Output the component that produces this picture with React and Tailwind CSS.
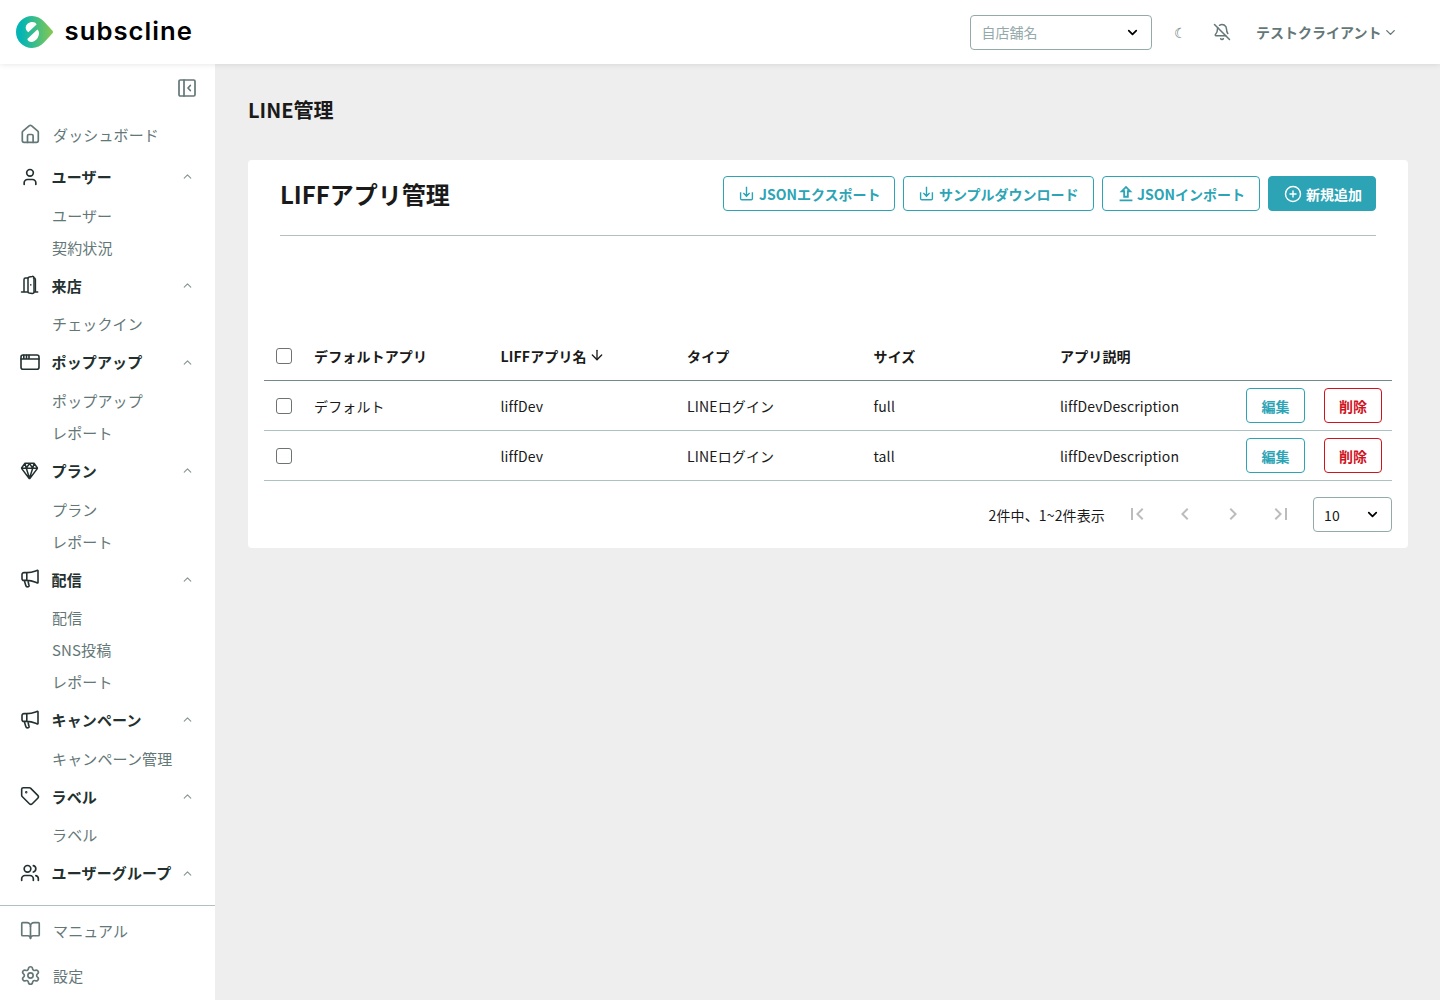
import React from 'react';
import { BellOff, BookOpen, CirclePlus, Settings, Tag, User, Users, ChevronDown, ChevronUp, ArrowDown } from 'lucide-react';
import { MdFirstPage, MdLastPage, MdChevronLeft, MdChevronRight, MdOutlineUpload } from 'react-icons/md';

function Svg({ children, size = 20, sw = 1.6, className = '' }) {
  return (
    <svg width={size} height={size} viewBox="0 0 20 20" fill="none" stroke="currentColor" strokeWidth={sw} strokeLinecap="round" strokeLinejoin="round" className={className}>
      {children}
    </svg>
  );
}

const Home = () => (
  <Svg sw={1.7}>
    <path d="M2.300 8.300a1.500 1.500 0 0 1 .6-1.200L9.400 1.700a1.600 1.600 0 0 1 2 0l6.400 5.400a1.500 1.500 0 0 1 .5 1.200v8.200a1.800 1.800 0 0 1-1.800 1.800H4.100a1.800 1.800 0 0 1-1.800-1.800z" />
    <path d="M7.500 18.300v-6.500a1.300 1.300 0 0 1 1.300-1.300h3a1.300 1.300 0 0 1 1.300 1.300v6.500" />
  </Svg>
);

const Door = () => (
  <Svg sw={1.500}>
    <path d="M1.500 17h6M14.500 17h3.200M4 17V4.500a1.600 1.600 0 0 1 1.600-1.600H8M13.500 2.900h.3a1.600 1.600 0 0 1 1.600 1.600V17" />
    <path d="M8 3.300a1.500 1.500 0 0 1 1.200-1.400l3-.5a1.500 1.500 0 0 1 1.800 1.400v14.300a1.500 1.500 0 0 1-1.800 1.400L9.200 18A1.500 1.500 0 0 1 8 16.600zM10.800 9.700v.3" />
  </Svg>
);

const Popup = () => (
  <Svg>
    <rect x="1" y="3" width="18" height="14.300" rx="2" />
    <path d="M1 7h18M3.800 3.200v3.400M6.500 3.200v3.400M9 3.200v3.400" />
  </Svg>
);

const Diamond = () => (
  <Svg sw={1.500}>
    <path d="M5 2.300h9L17.300 6.800a.7.700 0 0 1 0 .8L10 17.300a.6.600 0 0 1-1 0L1.700 7.600a.7.700 0 0 1 0-.8zM1.700 7.200h15.600M6.300 7.200l3.200 10 3.200-10M5 2.500l1.300 4.700L9.500 2.500l3.200 4.700L14 2.500" />
  </Svg>
);

const Megaphone = () => (
  <Svg>
    <path d="M6.800 3.600H4a2 2 0 0 0-2 2v3.800a2 2 0 0 0 2 2h2.800c3.100 0 6 .7 8.900 1.900l1.600.7a.5.500 0 0 0 .7-.5V1.700a.5.500 0 0 0-.7-.4l-1.600.6c-2.900 1.100-5.800 1.700-8.900 1.700zM6.800 3.600v7.800M4.300 11.500l1.500 5a1.800 1.800 0 0 0 2 1.300l.8-.2a.8.800 0 0 0 .5-1l-.6-1.800h.2l-.9-3.200" />
  </Svg>
);

const Collapse = () => (
  <Svg className="text-[#647777]" sw={1.7}>
    <rect x="2" y="2" width="16" height="16" rx="1.300" />
    <path d="M7 2v16M13.300 7.500 11 10l2.300 2.500" />
  </Svg>
);

const Download = () => (
  <svg width="16" height="16" viewBox="0 0 16 16" fill="none" stroke="currentColor" strokeWidth="1.400">
    <path d="M1.600 6.300V12.500a1.200 1.200 0 0 0 1.200 1.200h9.400a1.200 1.200 0 0 0 1.200-1.200V6.300M7.500 .8v9.200M4.400 7.100 7.500 10.200l3.100-3.100" />
  </svg>
);

const groups = [
  ['ユーザー', <User size={20} strokeWidth={2} />, ['ユーザー', '契約状況']],
  ['来店', <Door />, ['チェックイン']],
  ['ポップアップ', <Popup />, ['ポップアップ', 'レポート']],
  ['プラン', <Diamond />, ['プラン', 'レポート']],
  ['配信', <Megaphone />, ['配信', 'SNS投稿', 'レポート']],
  ['キャンペーン', <Megaphone />, ['キャンペーン管理']],
  ['ラベル', <Tag size={20} strokeWidth={1.900} />, ['ラベル']],
  ['ユーザーグループ', <Users size={20} strokeWidth={2} />, []],
];

const rows = [
  ['デフォルト', 'liffDev', 'LINEログイン', 'full', 'liffDevDescription'],
  ['', 'liffDev', 'LINEログイン', 'tall', 'liffDevDescription'],
];

const CheckBox = () => (
  <span className="flex pl-3">
    <span className="size-4 rounded-[3px] border border-[#6f7272] bg-white" />
  </span>
);

const outline = 'flex h-[35px] items-center rounded-[4px] border text-sm font-bold whitespace-nowrap';
const tableGrid = 'grid grid-cols-[40px_186.500px_186.500px_186.500px_186.500px_186px_156px] items-center';

function Logo() {
  return (
    <svg width="178" height="34" viewBox="0 0 178 34" className="ml-4">
      <defs>
        <linearGradient id="brand" x1="0" x2="1">
          <stop offset="0.15" stopColor="#05b5b3" />
          <stop offset="1" stopColor="#86c84f" />
        </linearGradient>
      </defs>
      <path d="M16 1c5 0 8.700 2.200 12 5.500l8.500 9.200a1.800 1.800 0 0 1 0 2.500L28 27.500C24.700 30.800 21 33 16 33A16 16 0 0 1 16 1z" fill="url(#brand)" />
      <path d="M12.300 17.300C10.700 16.200 9.700 14.600 9.700 12.600 9.900 9.300 12.900 7 16.300 7c2 0 3.500.8 4.300 2.400zM21.400 14.600c1.400 1.200 1.900 3 1.500 5-.9 4.200-3.900 7.300-7.300 7.300-2.200 0-3.800-1-4.300-2.900z" fill="#fff" />
      <text x="48.500" y="24.500" textLength="128.500" lengthAdjust="spacingAndGlyphs" fontFamily="Inter, sans-serif" fontSize="24.500" fontWeight="600" fill="#000" className="tracking-[1px]">subscline</text>
    </svg>
  );
}

export default function App() {
  return (
    <div className="flex h-[1000px] flex-col overflow-hidden bg-[#eeeeee] font-['Noto_Sans_CJK_JP',sans-serif] text-sm text-[#1a1a1a]">
      <header className="relative z-10 flex h-16 shrink-0 items-center justify-between bg-white shadow-[0_0_6px_rgba(0,0,0,0.12)]">
        <Logo />
        <div className="flex items-center pr-[42px] text-[#647777]">
          <div className="flex h-[35px] w-[182px] items-center justify-between rounded-[4px] border border-[#94a9a9] pr-[11px] pl-[11px] text-[#94a9a9]">
            <span>自店舗名</span>
            <ChevronDown size={15} strokeWidth={2.800} className="text-black" />
          </div>
          <span className="ml-[22px] w-3 text-[14px] text-[#647777]">☾</span>
          <BellOff size={18} strokeWidth={2} className="ml-[27px]" />
          <span className="ml-[25.500px] font-bold">テストクライアント</span>
          <ChevronDown size={15} strokeWidth={2.200} className="ml-[1.500px]" />
        </div>
      </header>
      <div className="flex min-h-0 flex-1">
        <aside className="flex w-[215px] shrink-0 flex-col bg-white text-[15px] tracking-[0.13px] text-[#647777]">
          <div className="flex h-12 shrink-0 items-center justify-end pr-[18px]"><Collapse /></div>
          <nav className="min-h-0 flex-1 overflow-hidden">
            <div className="flex h-[42.600px] items-center pt-[2px] pl-5">
              <span className="flex w-[33px]"><Home /></span>ダッシュボード
            </div>
            {groups.map(([name, icon, items]) => (
              <div key={name}>
                <div className="flex h-[44.600px] items-center pr-[21.500px] pl-5 font-bold text-[#233030]">
                  <span className="flex w-[31.600px]">{icon}</span>
                  <span className="flex-1 whitespace-nowrap">{name}</span>
                  <ChevronUp size={13} strokeWidth={2.200} className="shrink-0 text-[#899797]" />
                </div>
                {items.map((item) => (
                  <div key={item} className="flex h-8 items-center pt-[0.600px] pl-[52px]">{item}</div>
                ))}
              </div>
            ))}
          </nav>
          <div className="h-[95px] shrink-0 border-t border-[#b2c0c0] pt-[2px]">
            <div className="flex h-[45px] items-center pl-5"><span className="flex w-[33px]"><BookOpen size={21} strokeWidth={1.900} /></span>マニュアル</div>
            <div className="flex h-[45px] items-center pl-5"><span className="flex w-[33px]"><Settings size={21} strokeWidth={1.900} /></span>設定</div>
          </div>
        </aside>
        <main className="flex-1 px-[33px]">
          <h1 className="flex h-24 items-center text-xl font-bold"><span className="-mt-1">LINE管理</span></h1>
          <section className="h-[388px] w-[1160px] rounded-[4px] bg-white px-4 pt-4">
            <div className="mx-4 flex h-[60px] items-start justify-between border-b border-[#b2c0c0]">
              <h2 className="text-2xl leading-[36px] font-bold">LIFFアプリ管理</h2>
              <div className="flex gap-2 text-[#2ca4b5]">
                <button className={outline + ' w-[172px] gap-1 border-[#2ca4b5] pl-[15px]'}><Download />JSONエクスポート</button>
                <button className={outline + ' w-[191px] gap-1 border-[#2ca4b5] pl-[15px]'}><Download />サンプルダウンロード</button>
                <button className={outline + ' w-[158px] border-[#2ca4b5] pl-[11.500px]'}><MdOutlineUpload size={22} className="mr-[0.500px] shrink-0" /><span>JSONインポート</span></button>
                <button className={outline + ' w-[108px] border-[#2ca4b5] bg-[#2ca4b5] pl-[14.500px] text-white'}><CirclePlus size={18} strokeWidth={1.900} className="mr-[4.500px]" />新規追加</button>
              </div>
            </div>
            <div className="mt-24 border-b border-[#748989] font-bold tracking-[0.14px]">
              <div className={tableGrid + ' h-12'}>
                <CheckBox />
                <span className="pl-2.5">デフォルトアプリ</span>
                <span className="flex items-center gap-[2.500px] pl-2.5">LIFFアプリ名<ArrowDown size={16} strokeWidth={2} className="-mt-0.5" /></span>
                <span className="pl-2.5">タイプ</span>
                <span className="pl-2.5">サイズ</span>
                <span className="pl-2.5">アプリ説明</span>
              </div>
            </div>
            {rows.map((r, i) => (
              <div key={i} className={tableGrid + ' h-[50px] border-b border-[#acc2c2] tracking-[0.14px]'}>
                <CheckBox />
                {r.map((c, j) => <span key={j} className="pl-2.5">{c}</span>)}
                <span className="flex justify-between px-2.5 tracking-normal">
                  <button className={outline + ' w-[59px] justify-center border-[#2ca4b5] text-[#2ca4b5]'}>編集</button>
                  <button className={outline + ' w-[58px] justify-center border-[#d0141e] text-[#d0141e]'}>削除</button>
                </span>
              </div>
            ))}
            <div className="mt-4 flex items-center justify-end tracking-[0.14px]">
              <span>2件中、1~2件表示</span>
              <span className="-mt-px ml-[19.500px] flex gap-6 text-[#bcbcbc]">
                <MdFirstPage size={24} /><MdChevronLeft size={24} /><MdChevronRight size={24} /><MdLastPage size={24} />
              </span>
              <span className="ml-[20.500px] flex h-[35px] w-[79px] items-center justify-between rounded-[4px] border border-[#94a9a9] pr-[11.500px] pl-2.5">
                10<ChevronDown size={15} strokeWidth={2.800} className="text-black" />
              </span>
            </div>
          </section>
        </main>
      </div>
    </div>
  );
}
